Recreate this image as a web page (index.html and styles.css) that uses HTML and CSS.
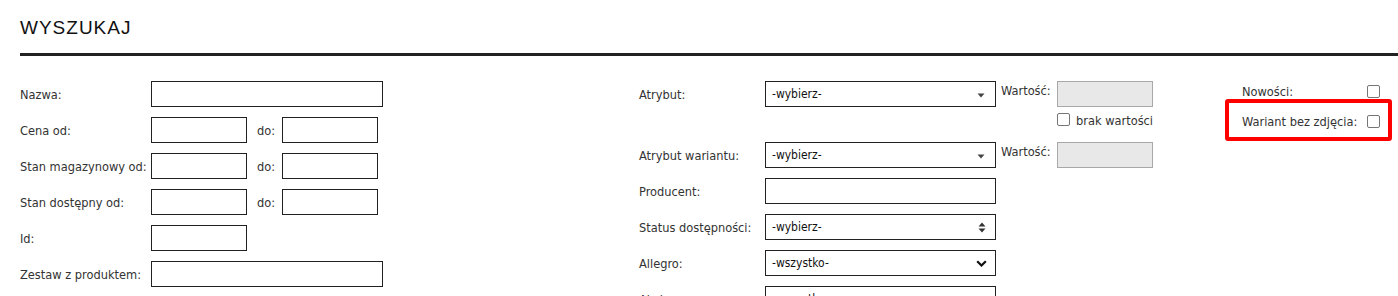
FILE: index.html
```html
<!DOCTYPE html>
<html lang="pl">
<head>
<meta charset="utf-8">
<title>Wyszukaj</title>
<link rel="stylesheet" href="styles.css">
</head>
<body>
<div class="page">
  <div class="header"><h1 class="title">WYSZUKAJ</h1></div>
  <div class="form">
    <div class="col col-left">
      <div class="row"><span class="label">Nazwa:</span><span class="input wide"></span></div>
      <div class="row"><span class="label">Cena od:</span><span class="input small"></span><span class="do">do:</span><span class="input small"></span></div>
      <div class="row"><span class="label">Stan magazynowy od:</span><span class="input small"></span><span class="do">do:</span><span class="input small"></span></div>
      <div class="row"><span class="label">Stan dostępny od:</span><span class="input small"></span><span class="do">do:</span><span class="input small"></span></div>
      <div class="row"><span class="label">Id:</span><span class="input small"></span></div>
      <div class="row"><span class="label">Zestaw z produktem:</span><span class="input wide"></span></div>
    </div>
    <div class="col col-mid">
      <div class="group">
        <div class="row">
          <span class="label mlabel">Atrybut:</span>
          <span class="select"><span class="opt">-wybierz-</span><svg class="arr" width="8" height="5" viewBox="0 0 8 5"><path d="M0.5 0.5h7L4 4.5z" fill="#444"/></svg></span>
          <span class="wlabel">Wartość:</span><span class="input small gray"></span>
        </div>
        <div class="brak"><span class="cb"></span><span class="brak-text">brak wartości</span></div>
      </div>
      <div class="row">
        <span class="label mlabel">Atrybut wariantu:</span>
        <span class="select"><span class="opt">-wybierz-</span><svg class="arr" width="8" height="5" viewBox="0 0 8 5"><path d="M0.5 0.5h7L4 4.5z" fill="#444"/></svg></span>
        <span class="wlabel">Wartość:</span><span class="input small gray"></span>
      </div>
      <div class="row"><span class="label mlabel">Producent:</span><span class="input mid"></span></div>
      <div class="row">
        <span class="label mlabel">Status dostępności:</span>
        <span class="select"><span class="opt">-wybierz-</span><svg class="arr2" width="8" height="11" viewBox="0 0 8 11"><path d="M4 0.5L7.5 4.5h-7z" fill="#333"/><path d="M0.5 6.5h7L4 10.5z" fill="#333"/></svg></span>
      </div>
      <div class="row">
        <span class="label mlabel">Allegro:</span>
        <span class="select"><span class="opt">-wszystko-</span><svg class="arr3" width="11" height="7" viewBox="0 0 11 7"><path d="M1.2 1.2L5.5 5.5L9.8 1.2" fill="none" stroke="#111" stroke-width="2.2"/></svg></span>
      </div>
      <div class="row">
        <span class="label mlabel">Akcje:</span>
        <span class="select"><span class="opt">-wszystko-</span><svg class="arr3" width="11" height="7" viewBox="0 0 11 7"><path d="M1.2 1.2L5.5 5.5L9.8 1.2" fill="none" stroke="#111" stroke-width="2.2"/></svg></span>
      </div>
    </div>
    <div class="col col-right">
      <div class="rrow"><span class="rlabel">Nowości:</span><span class="cb"></span></div>
      <div class="rrow highlighted"><span class="rlabel">Wariant bez zdjęcia:</span><span class="cb"></span><span class="mark"></span></div>
    </div>
  </div>
</div>
</body>
</html>
```

FILE: styles.css
```css
html, body {
  margin: 0;
  padding: 0;
  background: #fff;
}
body {
  font-family: "DejaVu Sans Condensed", "DejaVu Sans", Verdana, sans-serif;
  font-stretch: condensed;
  font-size: 12.7px;
  color: #333;
  overflow: hidden;
}
.page {
  padding-left: 20px;
}
.header {
  padding-top: 17px;
  padding-bottom: 14px;
  border-bottom: 3px solid #222;
}
.title {
  margin: 0;
  font-family: "Liberation Sans", Arial, sans-serif;
  font-stretch: normal;
  font-weight: normal;
  font-size: 19px;
  line-height: 22px;
  letter-spacing: 1px;
  color: #111;
}
.form {
  display: flex;
  padding-top: 25px;
}
.col {
  display: flex;
  flex-direction: column;
  gap: 10px;
}
.col-left { width: 619px; }
.col-mid { width: 603px; }
.col-right { flex: 1; }
.row {
  display: flex;
  align-items: center;
  height: 26px;
}
.label {
  width: 131px;
  flex: none;
  white-space: nowrap;
}
.mlabel { width: 126px; }
.input {
  box-sizing: border-box;
  height: 26px;
  border: 1px solid #222;
  background: #fff;
  flex: none;
}
.wide { width: 232px; }
.mid { width: 231px; }
.small { width: 96px; }
.do {
  width: 25px;
  margin-left: 10px;
  flex: none;
}
.select {
  box-sizing: border-box;
  width: 231px;
  height: 26px;
  border: 1px solid #222;
  background: #fff;
  display: flex;
  align-items: center;
  justify-content: space-between;
  padding: 0 8px 0 6px;
  flex: none;
  font-size: 12px;
}
.opt {
  color: #111;
}
.arr { margin-right: 2px; margin-top: 3px; }
.arr2 { margin-right: 1px; }
.arr3 { margin-right: 0; }
.wlabel {
  margin-left: 5px;
  width: 56px;
  flex: none;
  align-self: flex-start;
  padding-top: 2px;
}
.gray {
  background: #e8e8e8;
  border-color: #a8a8a8;
}
.group {
  display: flex;
  flex-direction: column;
}
.brak {
  display: flex;
  margin-top: 6px;
  height: 19px;
  align-items: flex-start;
  padding-left: 418px;
  gap: 6px;
}
.brak-text { line-height: 15px; }
.cb {
  box-sizing: border-box;
  width: 13px;
  height: 13px;
  border: 1px solid #767676;
  border-radius: 2px;
  background: #fff;
  flex: none;
}
.rrow {
  display: flex;
  align-items: center;
  height: 20px;
  position: relative;
}
.rlabel {
  width: 125px;
  flex: none;
  white-space: nowrap;
}
.mark {
  position: absolute;
  left: -17px;
  top: -12px;
  width: 167px;
  height: 42px;
  box-sizing: border-box;
  border: 4px solid #f00;
  border-radius: 3px;
}
```
